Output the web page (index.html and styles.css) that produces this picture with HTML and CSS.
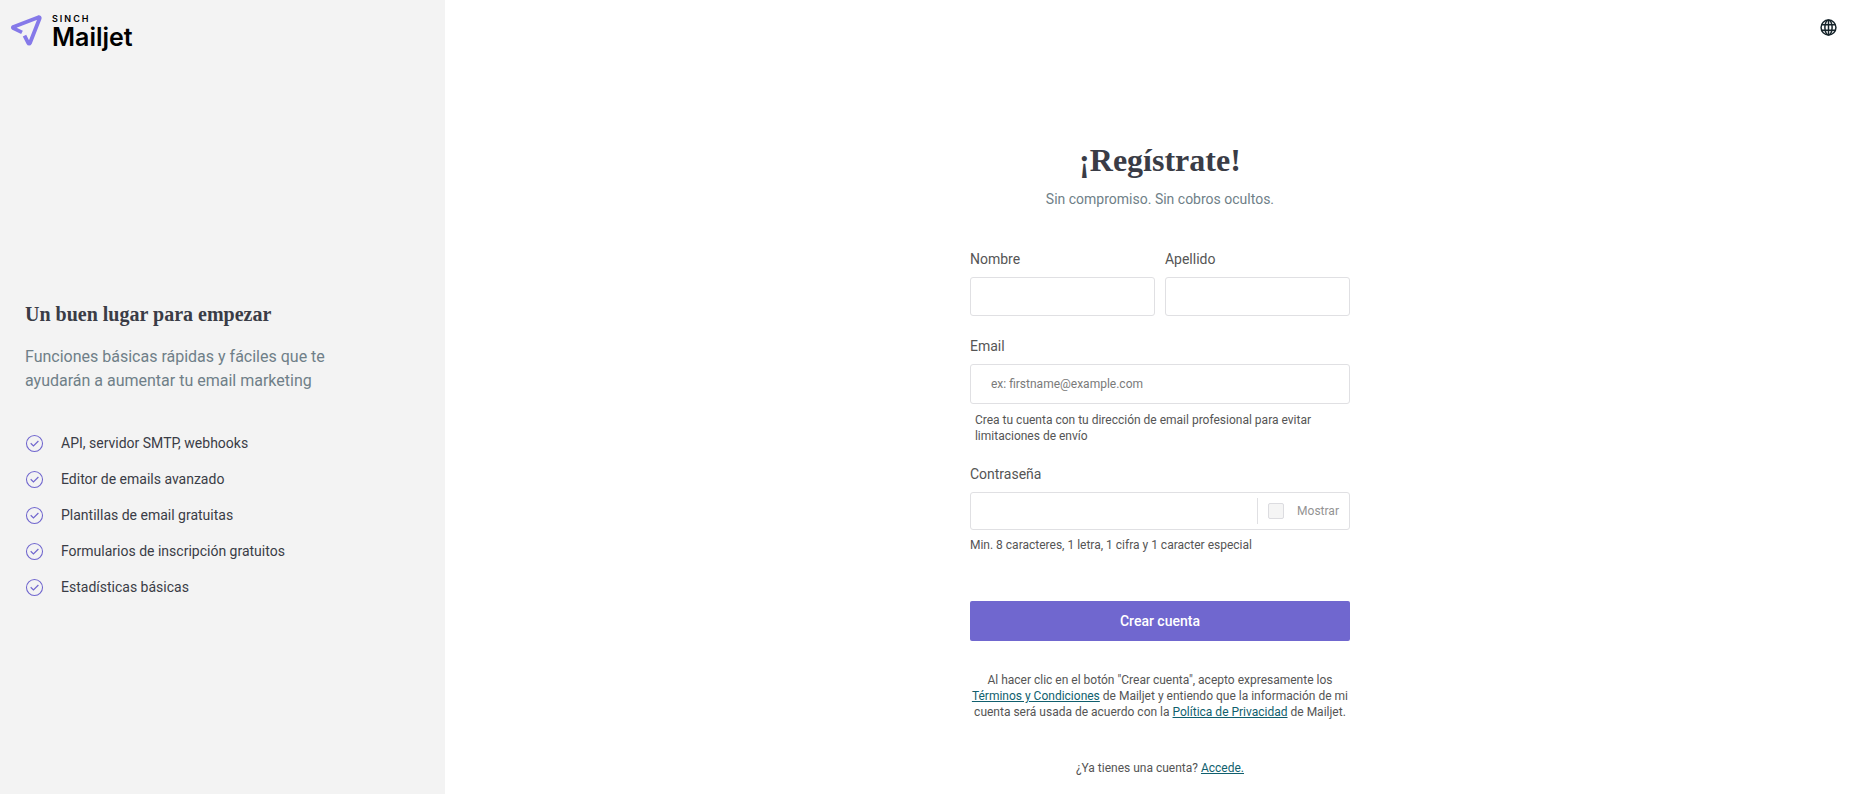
FILE: index.html
```html
<!DOCTYPE html>
<html lang="es">
<head>
<meta charset="utf-8">
<meta name="viewport" content="width=device-width, initial-scale=1">
<title>Mailjet</title>
<link rel="stylesheet" href="styles.css">
</head>
<body>
<svg class="defs" aria-hidden="true">
  <symbol id="check" viewBox="0 0 18 18">
    <circle cx="9" cy="9" r="7.6" fill="none" stroke="currentColor" stroke-width="1"/>
    <path d="M5.4 8.8 8 11.3 12.7 6.6" fill="none" stroke="currentColor" stroke-width="1.1"/>
  </symbol>
</svg>
<div class="page">
  <aside class="side">
    <div class="logo">
      <svg class="logo-mark" viewBox="0 0 32 32" aria-hidden="true">
        <path d="M12 18.4 3.2 14.1a.7.7 0 0 1 0-1.2L28.6 3.2a.9.9 0 0 1 1.1 1.1L19.9 29.2a.9.9 0 0 1-1.6 0L14.5 21.6" fill="none" stroke="#8579e9" stroke-width="3.8" stroke-linejoin="round"/>
      </svg>
      <div class="logo-text">
        <span class="logo-over">SINCH</span>
        <span class="logo-name">Mailjet</span>
      </div>
    </div>
    <section class="pitch">
      <h2 class="pitch-title">Un buen lugar para empezar</h2>
      <p class="pitch-text">Funciones básicas rápidas y fáciles que te ayudarán a aumentar tu email marketing</p>
      <ul class="features">
        <li class="feature"><svg class="check"><use href="#check"/></svg>API, servidor SMTP, webhooks</li>
        <li class="feature"><svg class="check"><use href="#check"/></svg>Editor de emails avanzado</li>
        <li class="feature"><svg class="check"><use href="#check"/></svg>Plantillas de email gratuitas</li>
        <li class="feature"><svg class="check"><use href="#check"/></svg>Formularios de inscripción gratuitos</li>
        <li class="feature"><svg class="check"><use href="#check"/></svg>Estadísticas básicas</li>
      </ul>
    </section>
  </aside>
  <main class="main">
    <header class="topbar">
      <button class="lang" type="button" aria-label="Idioma">
        <svg class="globe" viewBox="0 0 16 16" fill="none" stroke="#16242b" stroke-width="1.4" aria-hidden="true">
          <circle cx="8" cy="8" r="7"/>
          <ellipse cx="8" cy="8" rx="3.4" ry="7"/>
          <path d="M8 1v14M1.6 5.4h12.8M1.6 10.6h12.8"/>
        </svg>
      </button>
    </header>
    <form class="form">
      <h1 class="title">¡Regístrate!</h1>
      <p class="subtitle">Sin compromiso. Sin cobros ocultos.</p>
      <div class="names">
        <div class="field">
          <label class="label" for="first">Nombre</label>
          <input class="input" id="first" type="text">
        </div>
        <div class="field">
          <label class="label" for="last">Apellido</label>
          <input class="input" id="last" type="text">
        </div>
      </div>
      <div class="field">
        <label class="label" for="email">Email</label>
        <input class="input input-email" id="email" type="email" placeholder="ex: firstname@example.com">
        <p class="help help-inset">Crea tu cuenta con tu dirección de email profesional para evitar limitaciones de envío</p>
      </div>
      <div class="field field-password">
        <label class="label" for="password">Contraseña</label>
        <div class="password">
          <input class="password-input" id="password" type="password">
          <div class="reveal">
            <input class="box" id="show" type="checkbox">
            <label class="reveal-label" for="show">Mostrar</label>
          </div>
        </div>
        <p class="help">Min. 8 caracteres, 1 letra, 1 cifra y 1 caracter especial</p>
      </div>
      <button class="submit" type="button">Crear cuenta</button>
      <p class="legal">Al hacer clic en el botón "Crear cuenta", acepto expresamente los <a class="link" href="#">Términos y Condiciones</a> de Mailjet y entiendo que la información de mi cuenta será usada de acuerdo con la <a class="link" href="#">Política de Privacidad</a> de Mailjet.</p>
      <p class="login">¿Ya tienes una cuenta? <a class="link" href="#">Accede.</a></p>
    </form>
  </main>
</div>
</body>
</html>
```

FILE: styles.css
```css
* { box-sizing: border-box; }
body { margin: 0; font-family: Roboto, sans-serif; font-size: 14px; line-height: 20px; color: #555; background: #fff; }
h1, h2, p, ul { margin: 0; padding: 0; }
.defs { position: absolute; width: 0; height: 0; }

.page { display: grid; grid-template-columns: 24.05% 1fr; min-height: 100vh; }
.side { background: #f3f3f3; }
.logo { display: flex; gap: 10px; height: 64px; padding: 14px 10px 0; }
.logo-mark { width: 32px; height: 32px; }
.logo-text { display: flex; flex-direction: column; color: #000; font-family: Inter, sans-serif; }
.logo-over { font-size: 9px; line-height: 9px; font-weight: 600; letter-spacing: 2px; }
.logo-name { font-size: 25px; line-height: 28px; font-weight: 600; }

.pitch { padding: 238px 24px 24px 25px; }
.pitch-title { font: bold 20px/24px "Liberation Serif", serif; color: #3a3c46; }
.pitch-text { max-width: 320px; margin-top: 19px; font-size: 16px; line-height: 24px; color: #6f7f88; }
.features { margin-top: 32px; list-style: none; }
.feature { display: flex; align-items: center; gap: 17px; line-height: 36px; color: #3a3c46; }
.check { width: 19px; height: 19px; color: #7066ce; }

.main { display: flex; flex-direction: column; padding-left: 25px; }
.topbar { display: flex; justify-content: flex-end; height: 56px; padding: 19px 13px 0; }
.lang { display: flex; width: 17px; height: 17px; padding: 0; border: 0; background: none; }
.globe { width: 17px; height: 17px; }

.form { display: flex; flex-direction: column; gap: 20px; width: 100%; max-width: 380px; margin: 84px auto 18px; }
.title { font: bold 32px/40px "Liberation Serif", serif; color: #3a3c46; text-align: center; }
.subtitle { margin: -11px 0 20px; color: #6f7f88; text-align: center; }
.names { display: grid; grid-template-columns: 1fr 1fr; gap: 10px; }
.field { display: flex; flex-direction: column; gap: 8px; }
.field-password { gap: 7px; }
.input, .password { width: 100%; height: 39px; padding: 0 8px; border: 1px solid #e0e0e3; border-radius: 3px; background: #fff; font: 12px Roboto, sans-serif; color: #555; }
.input-email { height: 40px; padding: 0 20px; }
.input::placeholder { color: #7a7a7a; }
.password { display: flex; align-items: center; height: 38px; margin-top: 1px; padding: 0 10px 0 0; }
.password-input { flex: 1; min-width: 0; height: 36px; padding: 0 8px; border: 0; background: none; }
.reveal { display: flex; align-items: center; gap: 13px; height: 26px; padding-left: 10px; border-left: 1px solid #e0e0e3; }
.box { appearance: none; width: 16px; height: 16px; margin: 0; border: 1px solid #dcdce0; border-radius: 2px; background: #f5f5f5; }
.reveal-label { color: #939393; }
.help { font-size: 12px; line-height: 16px; }
.help-inset { padding: 0 5px; }
.submit { height: 40px; margin-top: 28px; border: 0; border-radius: 2px; background: #7067cf; color: #fff; font: 500 14px Roboto, sans-serif; }
.legal { margin-top: 11px; font-size: 12px; line-height: 16px; text-align: center; }
.login { margin-top: 20px; font-size: 12px; line-height: 16px; text-align: center; }
.link { color: #105f6e; }
```
